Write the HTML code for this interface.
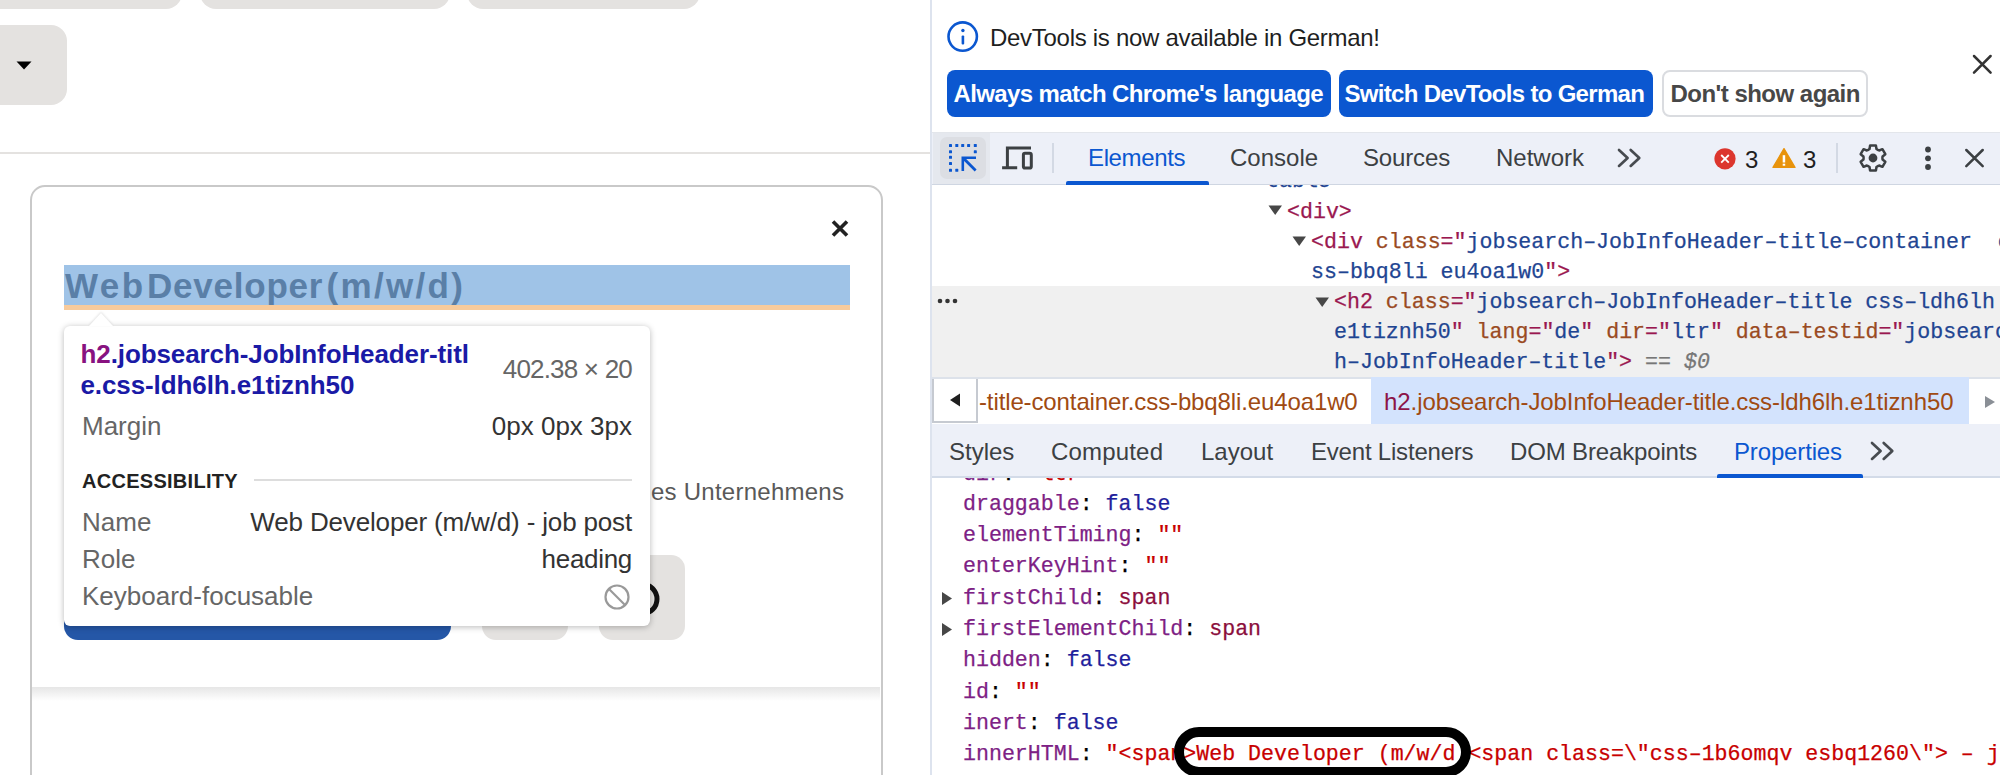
<!DOCTYPE html>
<html><head><meta charset="utf-8">
<style>
*{box-sizing:border-box;margin:0;padding:0}
html,body{width:2000px;height:775px;overflow:hidden;background:#fff;font-family:"Liberation Sans",sans-serif}
.a{position:absolute}
.mono{font-family:"Liberation Mono",monospace}
/* left page */
#left{position:absolute;left:0;top:0;width:930px;height:775px;background:#fff;overflow:hidden}
.tab{position:absolute;top:-40px;height:49px;background:#e4e2e0;border-radius:16px}
#dd{left:-20px;top:25px;width:87px;height:80px;background:#e4e2e0;border-radius:16px}
#hline{left:0;top:152px;width:930px;height:2px;background:#e4e2e0}
#card{left:30px;top:185px;width:853px;height:700px;border:2px solid #c9c9c9;border-radius:15px;background:#fff}
#hl{left:64px;top:265px;width:786px;height:40px;background:#9fc3e7}
#hlm{left:64px;top:305px;width:786px;height:5px;background:#f8cb9c}
#title,#title2,#title3{top:264px;font-weight:bold;font-size:35px;color:#5a7fa7;white-space:nowrap;line-height:44px}
#unt{left:651px;top:478px;font-size:24px;letter-spacing:0.25px;color:#595959;white-space:nowrap;line-height:28px}
#btnblue{left:64px;top:555px;width:387px;height:85px;background:#2557a7;border-radius:14px}
.gbtn{position:absolute;top:555px;width:86px;height:85px;background:#e4e2e0;border-radius:14px}
#shadow{left:32px;top:687px;width:848px;height:14px;background:linear-gradient(#e6e6e6,rgba(255,255,255,0))}
#tip{left:64px;top:326px;width:586px;height:300px;background:#fff;border-radius:6px;box-shadow:0 1px 6px rgba(0,0,0,.28)}
#tiparrow{left:89px;top:313px;width:0;height:0;border-left:12px solid transparent;border-right:12px solid transparent;border-bottom:13px solid #fff;filter:drop-shadow(0 -1px 1px rgba(0,0,0,.12))}
.tt{position:absolute;white-space:nowrap;font-size:26px;line-height:30px}
/* devtools */
.dtx{position:absolute;white-space:nowrap;font-size:24px;line-height:30px}
.bb{position:absolute;height:47px;border-radius:8px;background:#0b57d0;color:#fff;font-weight:bold;font-size:24px;line-height:47px;padding-left:8px;white-space:nowrap;letter-spacing:-0.69px}
.bw{position:absolute;height:47px;border-radius:8px;background:#fff;border:2px solid #dadce0;color:#474747;font-weight:bold;font-size:24px;line-height:43px;padding-left:8px;white-space:nowrap;letter-spacing:-0.52px}
.mn{position:absolute;white-space:pre;-webkit-text-stroke:0.25px currentColor;font-family:"Liberation Mono",monospace;font-size:21.6px;line-height:30px}
.tg{color:#9a1850}.at{color:#9a4a22}.av{color:#1f4592}
.tri{width:16px;height:13px}.tri path{fill:#474747}
.tri2{width:14px;height:16px}.tri2 path{fill:#474747}
.pn{color:#7e1f85}.sv{color:#c80000}.bv{color:#1f1f9c}.nv{color:#8b0e3c}


</style></head>
<body>
<div id="left">
  <div class="tab" style="left:-60px;width:242px"></div>
  <div class="tab" style="left:200px;width:250px"></div>
  <div class="tab" style="left:467px;width:233px"></div>
  <div id="dd" class="a"></div>
  <svg class="a" style="left:16px;top:61px" width="16" height="9"><path d="M0.5 0.5H15.5L8 8.5Z" fill="#000"/></svg>
  <div id="hline" class="a"></div>
  <div id="card" class="a"></div>
  <svg class="a" style="left:831px;top:220px" width="18" height="17"><path d="M2 1.5L16 15.5M16 1.5L2 15.5" stroke="#222" stroke-width="3.6" stroke-linecap="butt"/></svg>
  <div id="hl" class="a"></div>
  <div id="hlm" class="a"></div>
  <div id="title" class="a" style="left:65px;letter-spacing:2.4px">Web</div><div id="title2" class="a" style="left:147px;letter-spacing:0.78px">Developer</div><div id="title3" class="a" style="left:326.5px;letter-spacing:2.3px">(m/w/d)</div>
  <div id="unt" class="a">es Unternehmens</div>
  <div id="btnblue" class="a"></div>
  <div class="gbtn" style="left:482px"></div>
  <div class="gbtn" style="left:599px"></div>
  <svg class="a" style="left:620px;top:578px" width="46" height="42"><circle cx="22" cy="21" r="15" fill="none" stroke="#111" stroke-width="5"/></svg>
  <div id="shadow" class="a"></div>
  <div id="tip" class="a">
    <div class="tt" style="left:16.5px;top:13px;font-weight:bold;color:#1a1aa6;letter-spacing:-0.1px"><span style="color:#881280">h2</span>.jobsearch-JobInfoHeader-titl</div>
    <div class="tt" style="left:16.5px;top:44px;font-weight:bold;color:#1a1aa6;letter-spacing:-0.1px">e.css-ldh6lh.e1tiznh50</div>
    <div class="tt" style="right:18px;top:28px;color:#666;letter-spacing:-0.8px">402.38 × 20</div>
    <div class="tt" style="left:18px;top:85px;color:#666">Margin</div>
    <div class="tt" style="right:18px;top:85px;color:#333">0px 0px 3px</div>
    <div class="tt" style="left:18px;top:140px;font-size:20px;font-weight:bold;color:#222;letter-spacing:0.28px">ACCESSIBILITY</div>
    <div class="a" style="left:190px;top:153px;width:378px;height:2px;background:#ddd"></div>
    <div class="tt" style="left:18px;top:181px;color:#666">Name</div>
    <div class="tt" style="right:18px;top:181px;color:#333;letter-spacing:-0.16px">Web Developer (m/w/d) - job post</div>
    <div class="tt" style="left:18px;top:218px;color:#666">Role</div>
    <div class="tt" style="right:18px;top:218px;color:#333;letter-spacing:-0.3px">heading</div>
    <div class="tt" style="left:18px;top:255px;color:#666">Keyboard-focusable</div>
    <svg class="a" style="left:538px;top:256px" width="30" height="30"><circle cx="15" cy="15" r="11.5" fill="none" stroke="#999" stroke-width="2.2"/><path d="M7 7L23 23" stroke="#999" stroke-width="2.2"/></svg>
  </div>
  <div id="tiparrow" class="a"></div>
</div>
<div id="dt">
  <div class="a" style="left:930px;top:0;width:2px;height:775px;background:#dde3ee"></div>
  <!-- banner -->
  <svg class="a" style="left:946px;top:20px" width="34" height="34"><circle cx="16.7" cy="16.6" r="14.2" fill="none" stroke="#0b57d0" stroke-width="2.6"/><circle cx="16.9" cy="10.5" r="1.7" fill="#0b57d0"/><rect x="15.6" y="15.5" width="2.6" height="9" rx="1" fill="#0b57d0"/></svg>
  <div class="dtx" style="left:990px;top:23px;color:#1f1f1f;letter-spacing:-0.29px">DevTools is now available in German!</div>
  <div class="bb" style="left:947px;top:70px;width:384px;padding-left:6.5px;letter-spacing:-0.63px">Always match Chrome's language</div>
  <div class="bb" style="left:1339px;top:70px;width:314px;padding-left:5.5px">Switch DevTools to German</div>
  <div class="bw" style="left:1662px;top:70px;width:206px;padding-left:6.5px">Don't show again</div>
  <svg class="a" style="left:1970px;top:53px" width="24" height="24"><path d="M4 3L20.6 19.6M20.6 3L4 19.6" stroke="#333" stroke-width="2.5" stroke-linecap="round"/></svg>
  <!-- toolbar -->
  <div class="a" style="left:932px;top:132px;width:1068px;height:53px;background:#edf0f8;border-top:1px solid #e3e6eb;border-bottom:1px solid #cfd6e2"></div>
  <div class="a" style="left:933px;top:133px;width:57px;height:51px;background:#e5e8ee"></div>
  <div class="a" style="left:940px;top:137px;width:46px;height:42px;background:#dcdee3;border-radius:7px"></div>
  <svg class="a" style="left:946px;top:141px" width="36" height="36"><g fill="#0b57d0"><rect x="3.0" y="3.0" width="3" height="3" rx="0.6"/><rect x="9.3" y="3.0" width="3" height="3" rx="0.6"/><rect x="15.2" y="3.0" width="3" height="3" rx="0.6"/><rect x="21.1" y="3.0" width="3" height="3" rx="0.6"/><rect x="27.8" y="3.0" width="3" height="3" rx="0.6"/><rect x="3.0" y="9.3" width="3" height="3" rx="0.6"/><rect x="3.0" y="14.8" width="3" height="3" rx="0.6"/><rect x="3.0" y="21.1" width="3" height="3" rx="0.6"/><rect x="3.0" y="27.8" width="3" height="3" rx="0.6"/><rect x="9.3" y="27.8" width="3" height="3" rx="0.6"/><rect x="27.8" y="9.3" width="3" height="3" rx="0.6"/></g><path d="M15.5 15.5H30V18.1H20.2L30.6 28.5L28.7 30.4L18.1 19.9V30H15.5Z" fill="#0b57d0"/></svg>
  <svg class="a" style="left:1000px;top:144px" width="36" height="28"><path d="M7.4 23.8V3.9H31M2.1 23.8H17.2" fill="none" stroke="#3c4043" stroke-width="3"/><rect x="23.4" y="9.3" width="7.9" height="14.7" rx="1.6" fill="none" stroke="#3c4043" stroke-width="3"/></svg>
  <div class="a" style="left:1052px;top:143px;width:2px;height:30px;background:#d3d9e4"></div>
  <div class="dtx" style="left:1088px;top:143px;color:#0b57d0;letter-spacing:-0.37px">Elements</div>
  <div class="dtx" style="left:1230px;top:143px;color:#3c4043">Console</div>
  <div class="dtx" style="left:1363px;top:143px;color:#3c4043;letter-spacing:-0.15px">Sources</div>
  <div class="dtx" style="left:1496px;top:143px;color:#3c4043">Network</div>
  <div class="a" style="left:1066px;top:181px;width:143px;height:4px;background:#0b57d0;border-radius:2px 2px 0 0"></div>
  <svg class="a" style="left:1615px;top:147px" width="28" height="22"><path d="M4 3L12.6 10.9L4 18.9M15.7 3L24.3 10.9L15.7 18.9" fill="none" stroke="#474b50" stroke-width="2.7" stroke-linecap="round" stroke-linejoin="round"/></svg>
  <svg class="a" style="left:1713px;top:147px" width="24" height="24"><circle cx="12" cy="11.8" r="10.6" fill="#dc362e"/><path d="M8.2 8L15.8 15.6M15.8 8L8.2 15.6" stroke="#fff" stroke-width="1.8"/></svg>
  <div class="dtx" style="left:1745px;top:144.5px;color:#1f1f1f">3</div>
  <svg class="a" style="left:1770px;top:146px" width="28" height="24"><path d="M14 2.6L25 21.4H3Z" fill="#e8930c" stroke="#e8930c" stroke-width="1.3" stroke-linejoin="round"/><rect x="12.7" y="9.2" width="2.5" height="7.3" fill="#fff"/><rect x="12.7" y="17.7" width="2.5" height="2" fill="#fff"/></svg>
  <div class="dtx" style="left:1803px;top:144.5px;color:#1f1f1f">3</div>
  <div class="a" style="left:1836px;top:143px;width:2px;height:30px;background:#d3d9e4"></div>
  <svg class="a" style="left:1856px;top:141px" width="34" height="34"><g transform="translate(17,17)"><path id="gear" d="M4.70 -8.15 L3.48 -9.06 L2.90 -12.57 L-2.90 -12.57 L-3.48 -9.06 L-4.70 -8.15 L-6.10 -7.54 L-9.43 -8.80 L-12.34 -3.77 L-9.58 -1.52 L-9.41 0.00 L-9.58 1.52 L-12.34 3.77 L-9.43 8.80 L-6.10 7.54 L-4.70 8.15 L-3.48 9.06 L-2.90 12.57 L2.90 12.57 L3.48 9.06 L4.70 8.15 L6.10 7.54 L9.43 8.80 L12.34 3.77 L9.58 1.52 L9.41 0.00 L9.58 -1.52 L12.34 -3.77 L9.43 -8.80 L6.10 -7.54Z" stroke-linejoin="round" fill="none" stroke="#3c4043" stroke-width="2.5"/><circle r="4.4" fill="#3c4043"/></g></svg>
  <svg class="a" style="left:1920px;top:145px" width="16" height="28"><circle cx="8" cy="4.5" r="2.9" fill="#3c4043"/><circle cx="8" cy="13.3" r="2.9" fill="#3c4043"/><circle cx="8" cy="22" r="2.9" fill="#3c4043"/></svg>
  <svg class="a" style="left:1962px;top:146px" width="26" height="24"><path d="M4.3 4L20.7 20.2M20.7 4L4.3 20.2" stroke="#3c4043" stroke-width="2.5" stroke-linecap="round"/></svg>
  <!-- elements tree -->
  <div class="a" style="left:932px;top:286px;width:1068px;height:91px;background:#f0f0f0"></div>
  <svg class="a" style="left:936px;top:296px" width="24" height="10"><circle cx="4" cy="5" r="2.3" fill="#333"/><circle cx="11.5" cy="5" r="2.3" fill="#333"/><circle cx="19" cy="5" r="2.3" fill="#333"/></svg>
  <div class="mn" style="left:1266px;top:166px;color:#1f4592;clip-path:inset(19px 0 0 0)">table</div>
  <svg class="a tri" style="left:1268px;top:204px"><path d="M0.5 1.5H14L7.2 11Z"/></svg>
  <div class="mn" style="left:1287px;top:197px"><span class="tg">&lt;div&gt;</span></div>
  <svg class="a tri" style="left:1292px;top:235px"><path d="M0.5 1.5H14L7.2 11Z"/></svg>
  <div class="mn" style="left:1311px;top:227px"><span class="tg">&lt;div</span> <span class="at">class</span><span class="tg">="</span><span class="av">jobsearch–JobInfoHeader–title–container  c</span></div>
  <div class="mn" style="left:1311px;top:257px"><span class="av">ss–bbq8li eu4oa1w0</span><span class="tg">"&gt;</span></div>
  <svg class="a tri" style="left:1315px;top:296px"><path d="M0.5 1.5H14L7.2 11Z"/></svg>
  <div class="mn" style="left:1334px;top:287px"><span class="tg">&lt;h2</span> <span class="at">class</span><span class="tg">="</span><span class="av">jobsearch–JobInfoHeader–title css–ldh6lh</span></div>
  <div class="mn" style="left:1334px;top:317px"><span class="av">e1tiznh50</span><span class="tg">"</span> <span class="at">lang</span><span class="tg">="</span><span class="av">de</span><span class="tg">"</span> <span class="at">dir</span><span class="tg">="</span><span class="av">ltr</span><span class="tg">"</span> <span class="at">data–testid</span><span class="tg">="</span><span class="av">jobsearc</span></div>
  <div class="mn" style="left:1334px;top:347px"><span class="av">h–JobInfoHeader–title</span><span class="tg">"&gt;</span> <span style="color:#777">==</span> <span style="color:#777;font-style:italic">$0</span></div>
  <!-- breadcrumbs -->
  <div class="a" style="left:932px;top:377px;width:1068px;height:47px;background:#fff;border-top:2px solid #dde2ea"></div>
  <div class="a" style="left:932px;top:379px;width:46px;height:44px;background:#fff;border:2px solid #c6cad1;border-top:none"></div>
  <svg class="a" style="left:948px;top:392px" width="14" height="16"><path d="M12 1.5V14.5L2 8Z" fill="#1f1f1f"/></svg>
  <div class="dtx" style="left:979px;top:387px;color:#a04a12;letter-spacing:-0.12px">-title-container.css-bbq8li.eu4oa1w0</div>
  <div class="a" style="left:1371px;top:377px;width:598px;height:47px;background:#d3e3fd"></div>
  <div class="dtx" style="left:1384px;top:387px;color:#a04a12;letter-spacing:-0.08px"><span style="color:#8c1448">h2</span>.jobsearch-JobInfoHeader-title.css-ldh6lh.e1tiznh50</div>
  <svg class="a" style="left:1982px;top:394px" width="16" height="16"><path d="M3 2V14L13 8Z" fill="#8a8f96"/></svg>
  <!-- sidebar tabs -->
  <div class="a" style="left:932px;top:424px;width:1068px;height:54px;background:#edf0f8;border-bottom:2px solid #d3dbe8"></div>
  <div class="dtx" style="left:949px;top:436.5px;color:#3c4043">Styles</div>
  <div class="dtx" style="left:1051px;top:436.5px;color:#3c4043;letter-spacing:0.18px">Computed</div>
  <div class="dtx" style="left:1201px;top:436.5px;color:#3c4043">Layout</div>
  <div class="dtx" style="left:1311px;top:436.5px;color:#3c4043;letter-spacing:-0.2px">Event Listeners</div>
  <div class="dtx" style="left:1510px;top:436.5px;color:#3c4043;letter-spacing:-0.15px">DOM Breakpoints</div>
  <div class="dtx" style="left:1734px;top:436.5px;color:#0b57d0;letter-spacing:-0.15px">Properties</div>
  <div class="a" style="left:1717px;top:474px;width:146px;height:4px;background:#0b57d0;border-radius:2px 2px 0 0"></div>
  <svg class="a" style="left:1868px;top:440px" width="28" height="22"><path d="M4 3L12.6 10.9L4 18.9M15.7 3L24.3 10.9L15.7 18.9" fill="none" stroke="#474b50" stroke-width="2.7" stroke-linecap="round" stroke-linejoin="round"/></svg>
  <!-- properties -->
  <div class="a" style="left:932px;top:478px;width:1068px;height:297px;overflow:hidden">
    <div class="mn pr" style="left:31px;top:-19px"><span class="pn">dir</span>: <span class="sv">"ltr"</span></div>
    <div class="mn pr" style="left:31px;top:11px"><span class="pn">draggable</span>: <span class="bv">false</span></div>
    <div class="mn pr" style="left:31px;top:42px"><span class="pn">elementTiming</span>: <span class="sv">""</span></div>
    <div class="mn pr" style="left:31px;top:73px"><span class="pn">enterKeyHint</span>: <span class="sv">""</span></div>
    <svg class="a tri2" style="left:9px;top:113px"><path d="M1 1V14L11 7.5Z"/></svg>
    <div class="mn pr" style="left:31px;top:105px"><span class="pn">firstChild</span>: <span class="nv">span</span></div>
    <svg class="a tri2" style="left:9px;top:144px"><path d="M1 1V14L11 7.5Z"/></svg>
    <div class="mn pr" style="left:31px;top:136px"><span class="pn">firstElementChild</span>: <span class="nv">span</span></div>
    <div class="mn pr" style="left:31px;top:167px"><span class="pn">hidden</span>: <span class="bv">false</span></div>
    <div class="mn pr" style="left:31px;top:199px"><span class="pn">id</span>: <span class="sv">""</span></div>
    <div class="mn pr" style="left:31px;top:230px"><span class="pn">inert</span>: <span class="bv">false</span></div>
    <div class="mn pr" style="left:31px;top:261px"><span class="pn">innerHTML</span>: <span class="sv">"&lt;span&gt;Web Developer (m/w/d)&lt;span class=\"css–1b6omqv esbq1260\"&gt; – job post&lt;/span&gt;&lt;/span&gt;"</span></div>
  </div>
  <div class="a" style="left:1174px;top:727px;width:297px;height:50px;border:10px solid #000;border-radius:25px"></div>
</div>
</body></html>
